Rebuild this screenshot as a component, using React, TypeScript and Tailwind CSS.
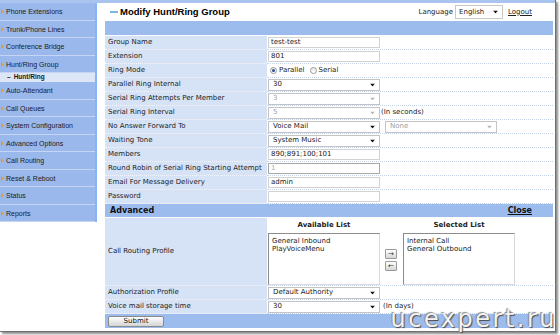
import React from 'react';

const menu = [
  'Phone Extensions',
  'Trunk/Phone Lines',
  'Conference Bridge',
  'Hunt/Ring Group',
  'SUB',
  'Auto-Attendant',
  'Call Queues',
  'System Configuration',
  'Advanced Options',
  'Call Routing',
  'Reset & Reboot',
  'Status',
  'Reports',
];

const Arrow = ({ off }: { off?: boolean }) => (
  <svg width="5" height="3" viewBox="0 0 5 3" className="absolute right-[4px] top-1/2 -translate-y-1/2">
    <path d="M0 0H5L2.5 3z" fill={off ? '#b8b8b8' : '#111'} />
  </svg>
);

const Select = ({ value, off, w = 'w-[112px]' }: { value: string; off?: boolean; w?: string }) => (
  <div
    className={`relative flex h-[12px] ${w} items-center border border-[#c4c4c4] bg-white pl-[4px] ${
      off ? 'text-[#a0a0a0]' : 'text-[#222]'
    }`}
  >
    {value}
    <Arrow off={off} />
  </div>
);

const Input = ({ value, off, dark }: { value: string; off?: boolean; dark?: boolean }) => (
  <div
    className={`flex h-[11px] w-[112px] items-center border bg-white pl-[2px] ${
      dark ? 'border-[#a8a8a8]' : 'border-[#d2d2d2]'
    } ${off ? 'text-[#a8a8a8]' : 'text-[#222]'}`}
  >
    {value}
  </div>
);

const Radio = ({ on }: { on?: boolean }) => (
  <span className="flex h-[7px] w-[7px] items-center justify-center rounded-full border border-[#9a9a9a] bg-gradient-to-b from-[#e8e8e8] to-white">
    {on && <span className="h-[3px] w-[3px] rounded-full bg-[#2a4f8a]" />}
  </span>
);

const Row = ({ label, children }: { label: string; children?: React.ReactNode }) => (
  <div className="flex h-[14px]">
    <div className="flex w-[162px] items-center border-b border-dotted border-[#f2f6fc] bg-[#d6e3f7] pl-[3px]">
      {label}
    </div>
    <div className="flex flex-1 items-center gap-[1px] border-b border-dotted border-[#c6d4ea] bg-white pl-[1px]">
      {children}
    </div>
  </div>
);

const ListBox = ({ items }: { items: string[] }) => (
  <div className="h-[52px] w-[112px] border border-t-[#8c8c8c] border-l-[#8c8c8c] border-r-[#d8d8d8] border-b-[#d8d8d8] bg-white pl-[3px] pt-[3px] leading-[8px] text-[#222]">
    {items.map((i) => (
      <div key={i}>{i}</div>
    ))}
  </div>
);

const MoveBtn = ({ children }: { children: string }) => (
  <div className="flex h-[10px] w-[12px] items-center justify-center rounded-[1px] border border-[#9a9a9a] bg-gradient-to-b from-white to-[#d6d6d6] text-[7px] leading-none text-[#333]">
    {children}
  </div>
);

export default function App() {
  return (
    <div className="relative h-[335px] w-[560px] overflow-hidden bg-white font-['DejaVu_Sans',sans-serif] text-[7px] leading-none text-[#222]">
      <div className="flex h-[332px] w-[556px] flex-col border-r border-b border-[#6f6f6f] shadow-[2px_2px_2px_rgba(0,0,0,0.45)]">
        <div className="h-[3px] bg-[#a8c4ef]" />
        <div className="flex flex-1">
          {/* sidebar */}
          <div className="w-[97px]">
            <div className="border-r-2 border-[#85b5f5] font-['Liberation_Sans',sans-serif] text-[7px] text-[#1b1b1b]">
              {menu.map((m) =>
                m === 'SUB' ? (
                  <div key={m} className="flex h-[9px] items-center bg-[#dde6f6] pl-[7px] text-[6.5px] font-bold">
                    <span className="mr-[3px]">–</span>Hunt/Ring
                  </div>
                ) : (
                  <div
                    key={m}
                    className="flex h-[17.5px] items-center border-b border-[#c5d5f3] bg-[#9bb8ec] pl-[1px] pt-[1px]"
                  >
                    <svg width="3" height="5" viewBox="0 0 3 5" className="mr-[2px]">
                      <path d="M0 0L3 2.5L0 5z" fill="#e39d35" />
                    </svg>
                    {m}
                  </div>
                )
              )}
            </div>
          </div>

          {/* main */}
          <div className="flex flex-1 flex-col pl-[8px] pr-[2px]">
            <div className="flex h-[18px] items-center">
              <span className="ml-[5px] mr-[2px] h-[2px] w-[8px] bg-[#7db6e6]" />
              <span className="font-['Liberation_Sans',sans-serif] text-[9.5px] font-bold text-black">
                Modify Hunt/Ring Group
              </span>
              <div className="ml-auto flex items-center">
                <span className="mr-[2px]">Language</span>
                <div className="relative flex h-[14px] w-[48px] items-center border border-[#c8c8c8] bg-white pl-[3px]">
                  English
                  <Arrow />
                </div>
                <span className="ml-[5px] mr-[21px] underline">Logout</span>
              </div>
            </div>

            <div className="h-[15px] border-b border-white bg-[#9dbcee]" />

            <Row label="Group Name">
              <Input value="test-test" />
            </Row>
            <Row label="Extension">
              <Input value="801" />
            </Row>
            <Row label="Ring Mode">
              <div className="ml-[2px] flex items-center gap-[2px]">
                <Radio on />
                <span>Parallel</span>
                <span className="ml-[1px]" />
                <Radio />
                <span>Serial</span>
              </div>
            </Row>
            <Row label="Parallel Ring Internal">
              <Select value="30" />
            </Row>
            <Row label="Serial Ring Attempts Per Member">
              <Select value="3" off />
            </Row>
            <Row label="Serial Ring Interval">
              <Select value="5" off />
              <span>(In seconds)</span>
            </Row>
            <Row label="No Answer Forward To">
              <Select value="Voice Mail" />
              <span className="ml-[4px]">
                <Select value="None" off />
              </span>
            </Row>
            <Row label="Waiting Tone">
              <Select value="System Music" />
            </Row>
            <Row label="Members">
              <Input value="890;891;100;101" />
            </Row>
            <Row label="Round Robin of Serial Ring Starting Attempt">
              <Input value="1" off dark />
            </Row>
            <Row label="Email For Message Delivery">
              <Input value="admin" />
            </Row>
            <Row label="Password">
              <Input value="" />
            </Row>

            <div className="flex h-[14px] items-center justify-between border-b border-white bg-[#9dbcee] pl-[5px] pr-[21px] text-[8px] font-bold text-[#111]">
              <span>Advanced</span>
              <span className="underline">Close</span>
            </div>

            <div className="flex h-[68px]">
              <div className="flex w-[162px] items-center border-b border-dotted border-[#f2f6fc] bg-[#d6e3f7] pl-[3px]">
                Call Routing Profile
              </div>
              <div className="flex flex-1 items-start border-b border-dotted border-[#c6d4ea] bg-white pl-[1px]">
                <div className="flex flex-col">
                  <div className="flex h-[15px] items-center justify-center font-bold">Available List</div>
                  <ListBox items={['General Inbound', 'PlayVoiceMenu']} />
                </div>
                <div className="ml-[5px] mr-[6px] mt-[31px] flex flex-col gap-[2px]">
                  <MoveBtn>→</MoveBtn>
                  <MoveBtn>←</MoveBtn>
                </div>
                <div className="flex flex-col">
                  <div className="flex h-[15px] items-center justify-center font-bold">Selected List</div>
                  <ListBox items={['Internal Call', 'General Outbound']} />
                </div>
              </div>
            </div>

            <Row label="Authorization Profile">
              <Select value="Default Authority" />
            </Row>
            <Row label="Voice mail storage time">
              <Select value="30" />
              <span className="ml-[2px]">(In days)</span>
            </Row>

            <div className="flex h-[14px] items-center bg-[#9dbcee] pl-[3px]">
              <div className="flex h-[11px] w-[56px] items-center justify-center rounded-[2px] border border-[#8a8a8a] bg-gradient-to-b from-white to-[#d4d4d4] text-[#111]">
                Submit
              </div>
            </div>
          </div>
        </div>
      </div>

      <div className="absolute bottom-[4px] right-[3px] font-['DejaVu_Sans',sans-serif] text-[24px] leading-none tracking-[2.5px] text-[#f2f2f2] [text-shadow:1px_1px_1px_#4a4a4a,-1px_-1px_1px_#8a8a8a]">
        ucexpert.ru
      </div>
    </div>
  );
}
